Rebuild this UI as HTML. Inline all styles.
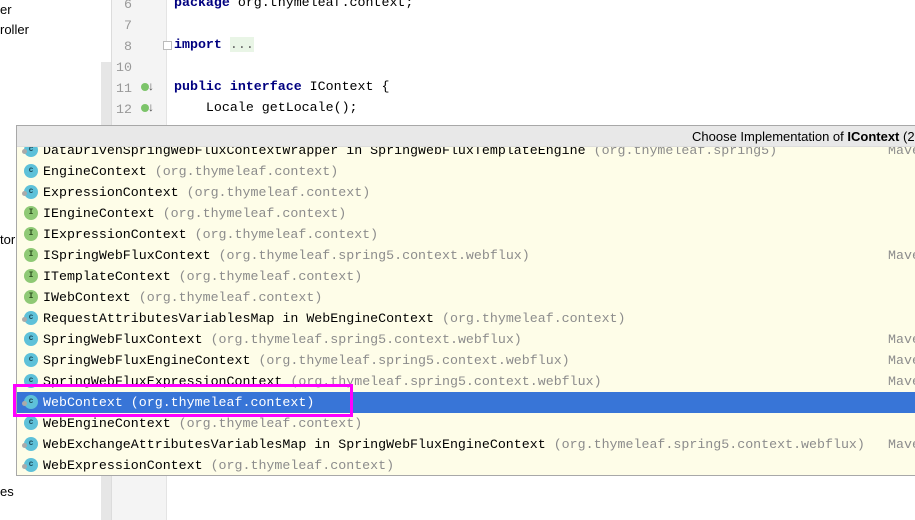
<!DOCTYPE html>
<html><head><meta charset="utf-8"><style>
*{margin:0;padding:0;box-sizing:border-box}
body{width:915px;height:520px;overflow:hidden;background:#fff;position:relative;font-family:"Liberation Sans",sans-serif}
.abs{position:absolute}
.ln{position:absolute;left:111px;width:21px;text-align:right;color:#999;font-family:"Liberation Mono",monospace;font-size:13.3px}
.code{position:absolute;left:174px;font-family:"Liberation Mono",monospace;font-size:13.3px;white-space:pre;color:#000}
.kw{color:#000080;font-weight:bold}
.row{position:absolute;left:0;width:898px;height:21px;line-height:21px}
.row .t{position:absolute;left:26px;top:0;font-family:"Liberation Mono",monospace;font-size:13.3px;white-space:pre;color:#000}
.row .g{color:#8c8c8c}
.row .m{position:absolute;left:871px;top:0;font-family:"Liberation Mono",monospace;font-size:13.3px;color:#8c8c8c}
.ic{position:absolute;left:7px;top:3px;width:14px;height:14px;border-radius:50%;background:#5ec1d9;color:#1a4a5a;font:bold 8px "Liberation Mono",monospace;text-align:center;line-height:14px}
.ic.i{background:#8fc975;color:#2c4f1e}
.ic.x:before{content:"";position:absolute;left:-2px;top:6px;width:5px;height:5px;border-radius:50%;background:#aaa}
</style></head><body>
<div class="abs" style="left:0;top:2px;font-size:13px">er</div>
<div class="abs" style="left:0;top:22px;font-size:13px">roller</div>
<div class="abs" style="left:0;top:232px;font-size:13px">tor</div>
<div class="abs" style="left:0;top:484px;font-size:13px">es</div>
<div class="abs" style="left:101px;top:62px;width:10px;height:458px;background:#e6e6e6"></div>
<div class="abs" style="left:111px;top:0;width:56px;height:520px;background:#f4f4f4;border-left:1px solid #dcdcdc;border-right:1px solid #e4e4e4"></div>
<div class="ln" style="top:-3px">6</div>
<div class="ln" style="top:18px">7</div>
<div class="ln" style="top:39px">8</div>
<div class="ln" style="top:60px">10</div>
<div class="ln" style="top:81px">11</div>
<div class="ln" style="top:102px">12</div>
<div class="abs" style="left:141px;top:83px;width:8px;height:8px;border-radius:50%;background:#7cc46a"></div>
<div class="abs" style="left:148px;top:79px;font-size:12px;color:#555">↓</div>
<div class="abs" style="left:141px;top:104px;width:8px;height:8px;border-radius:50%;background:#7cc46a"></div>
<div class="abs" style="left:148px;top:100px;font-size:12px;color:#555">↓</div>
<div class="abs" style="left:163px;top:41px;width:9px;height:9px;border:1px solid #bbb;background:#fff"></div>
<div class="code" style="top:-5px"><span class="kw">package</span> org.thymeleaf.context;</div>
<div class="code" style="top:37px"><span class="kw">import</span> <span style="background:#e9f5e6;color:#666">...</span></div>
<div class="code" style="top:79px"><span class="kw">public interface</span> IContext {</div>
<div class="code" style="top:100px">    Locale getLocale();</div>

<div class="abs" style="left:16px;top:125px;width:899px;height:351px;background:#fefde8;border:1px solid #a8a8a8;border-right:none;overflow:hidden">
 <div class="row" style="top:14px"><div class="ic x">c</div><span class="t">DataDrivenSpringWebFluxContextWrapper in SpringWebFluxTemplateEngine <span class="g">(org.thymeleaf.spring5)</span></span><span class="m">Mave</span></div>
 <div class="abs" style="left:0;top:0;width:899px;height:21px;background:#e8e8e8;border-bottom:1px solid #ddd;font-size:13px;line-height:22px;padding-left:675px;white-space:nowrap;color:#000">Choose Implementation of <b>IContext</b> (2</div>
 <div class="row" style="top:35px"><div class="ic">c</div><span class="t">EngineContext <span class="g">(org.thymeleaf.context)</span></span></div>
 <div class="row" style="top:56px"><div class="ic x">c</div><span class="t">ExpressionContext <span class="g">(org.thymeleaf.context)</span></span></div>
 <div class="row" style="top:77px"><div class="ic i">I</div><span class="t">IEngineContext <span class="g">(org.thymeleaf.context)</span></span></div>
 <div class="row" style="top:98px"><div class="ic i">I</div><span class="t">IExpressionContext <span class="g">(org.thymeleaf.context)</span></span></div>
 <div class="row" style="top:119px"><div class="ic i">I</div><span class="t">ISpringWebFluxContext <span class="g">(org.thymeleaf.spring5.context.webflux)</span></span><span class="m">Mave</span></div>
 <div class="row" style="top:140px"><div class="ic i">I</div><span class="t">ITemplateContext <span class="g">(org.thymeleaf.context)</span></span></div>
 <div class="row" style="top:161px"><div class="ic i">I</div><span class="t">IWebContext <span class="g">(org.thymeleaf.context)</span></span></div>
 <div class="row" style="top:182px"><div class="ic x">c</div><span class="t">RequestAttributesVariablesMap in WebEngineContext <span class="g">(org.thymeleaf.context)</span></span></div>
 <div class="row" style="top:203px"><div class="ic">c</div><span class="t">SpringWebFluxContext <span class="g">(org.thymeleaf.spring5.context.webflux)</span></span><span class="m">Mave</span></div>
 <div class="row" style="top:224px"><div class="ic">c</div><span class="t">SpringWebFluxEngineContext <span class="g">(org.thymeleaf.spring5.context.webflux)</span></span><span class="m">Mave</span></div>
 <div class="row" style="top:245px"><div class="ic">c</div><span class="t">SpringWebFluxExpressionContext <span class="g">(org.thymeleaf.spring5.context.webflux)</span></span><span class="m">Mave</span></div>
 <div class="row" style="top:266px;background:#3875d7"><div class="ic x">c</div><span class="t" style="color:#fff">WebContext (org.thymeleaf.context)</span></div>
 <div class="row" style="top:287px"><div class="ic">c</div><span class="t">WebEngineContext <span class="g">(org.thymeleaf.context)</span></span></div>
 <div class="row" style="top:308px"><div class="ic x">c</div><span class="t">WebExchangeAttributesVariablesMap in SpringWebFluxEngineContext <span class="g">(org.thymeleaf.spring5.context.webflux)</span></span><span class="m">Mave</span></div>
 <div class="row" style="top:329px"><div class="ic x">c</div><span class="t">WebExpressionContext <span class="g">(org.thymeleaf.context)</span></span></div>
</div>
<div class="abs" style="left:13px;top:384px;width:340px;height:33px;border:3px solid #ff00ff"></div>
</body></html>
